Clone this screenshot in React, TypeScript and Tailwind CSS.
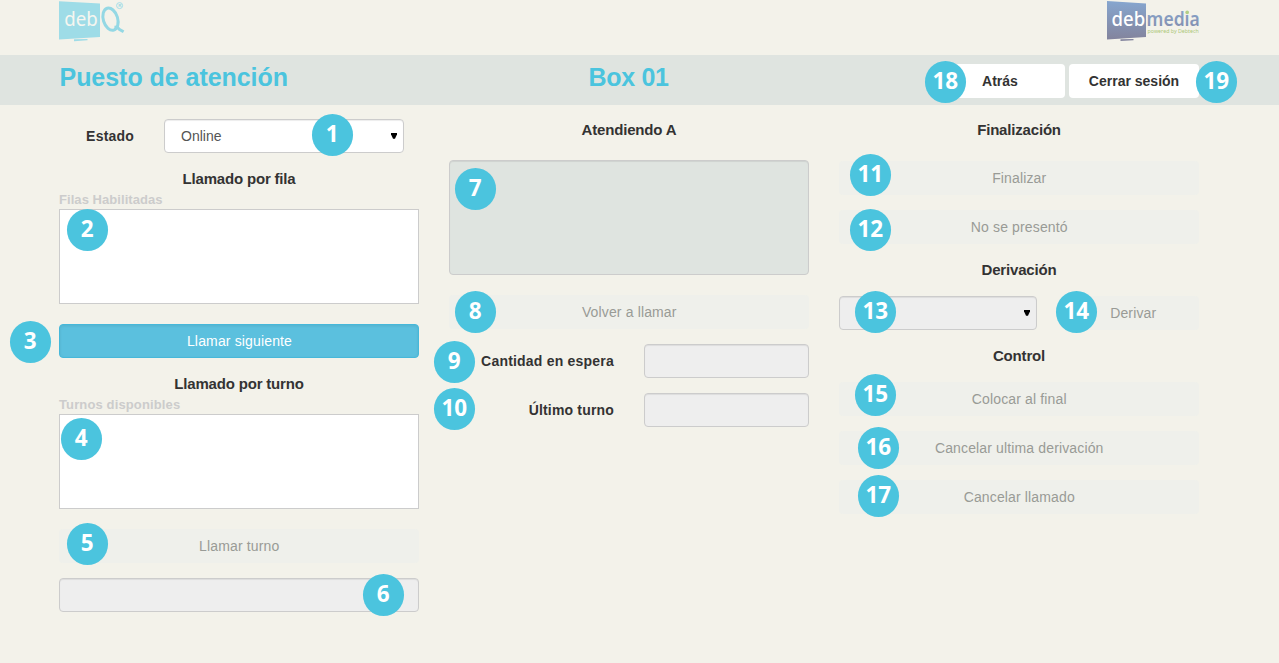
import type { ReactNode } from "react";
import clsx from "clsx";

function Badge({ n, className }: { n: number; className: string }) {
  return (
    <span
      className={clsx(
        "absolute z-10 mt-[0.4px] flex size-[41.4px] items-center justify-center rounded-full bg-[#4bc4de] pr-px pb-px font-['Noto_Sans',sans-serif] text-[22.5px] leading-none font-bold tracking-[-0.1px] text-white",
        className,
      )}
    >
      {n}
    </span>
  );
}

function Heading({ children, className }: { children: ReactNode; className?: string }) {
  return (
    <h2 className={clsx("text-center text-[15px] leading-5 font-bold tracking-[-0.18px] text-[#333]", className)}>{children}</h2>
  );
}

function DisabledButton({ children, badge, className }: { children: ReactNode; badge: ReactNode; className?: string }) {
  return (
    <div className={clsx("relative h-[34px]", className)}>
      <button
        disabled
        className="h-full w-full rounded bg-[#eff0eb] pl-[0.5px] text-[14px] tracking-[0.14px] text-[#999b96]"
      >
        {children}
      </button>
      {badge}
    </div>
  );
}

const field = "rounded border border-[#ccc] shadow-[inset_0_1px_1px_rgba(0,0,0,0.075)]";

function Arrow() {
  return (
    <svg className="mr-[6px] h-[6px] w-[6px]" viewBox="0 0 6 6">
      <path d="M0 0h6v1.2L4 5.8H2L0 1.2z" fill="#000" />
    </svg>
  );
}

function DebqLogo() {
  return (
    <svg width="68" height="42" viewBox="0 0 68 42" className="overflow-visible">
      <path d="M0 1.2 41 3.4V37L0 39.4z" fill="#9edce7" />
      <path d="M15 39.2l13.5-.3v1.4L15 41.2z" fill="#9edce7" />
      <text x="5.3" y="26.3" fontFamily="Noto Sans, sans-serif" fontSize="20" textLength="33.5" lengthAdjust="spacingAndGlyphs" fill="#f6f6f0">
        deb
      </text>
      <ellipse cx="51.5" cy="19.2" rx="7.2" ry="11.4" transform="rotate(-17 51.5 19.2)" fill="none" stroke="#94d8e4" strokeWidth="3" />
      <path d="M55.5 27.2l2.5-.2 2.6 2.6 4 2.2" fill="none" stroke="#94d8e4" strokeWidth="3" />
      <circle cx="60.6" cy="5.6" r="3" fill="none" stroke="#a5dee8" strokeWidth="1" />
      <text x="59.2" y="7.3" fontFamily="Liberation Sans, sans-serif" fontWeight="700" fontSize="4.4" fill="#94d8e4">
        R
      </text>
    </svg>
  );
}

function DebmediaLogo() {
  return (
    <svg width="94" height="42" viewBox="0 0 94 42" className="overflow-visible">
      <defs>
        <linearGradient id="screen" x1="0" y1="0" x2="0" y2="1">
          <stop offset="0" stopColor="#86a6cf" />
          <stop offset="1" stopColor="#83849d" />
        </linearGradient>
        <linearGradient id="word" x1="0" y1="0" x2="0" y2="1">
          <stop offset="0" stopColor="#89a9cf" />
          <stop offset="1" stopColor="#8289a9" />
        </linearGradient>
      </defs>
      <path d="M1 1 40 3.4V37L1 39.4z" fill="url(#screen)" />
      <path d="M14.5 39.2l13-.3v1.3l-13 .8z" fill="#83849d" />
      <text x="5.6" y="26.3" fontFamily="Noto Sans, sans-serif" fontWeight="500" fontSize="20" textLength="33.6" lengthAdjust="spacingAndGlyphs" fill="#fff">
        deb
      </text>
      <text x="40.6" y="26.3" fontFamily="Noto Sans, sans-serif" fontWeight="600" fontSize="19" textLength="53.2" lengthAdjust="spacingAndGlyphs" fill="url(#word)">
        media
      </text>
      <circle cx="81.2" cy="12.4" r="1.8" fill="#b5cf85" />
      <text x="41.6" y="33" fontFamily="Noto Sans, sans-serif" fontSize="6" textLength="51.2" lengthAdjust="spacingAndGlyphs" fill="#abc877">
        powered by Debtech
      </text>
    </svg>
  );
}

export default function App() {
  return (
    <div className="h-[663px] w-[1279px] overflow-hidden bg-[#f3f2ea] font-['Liberation_Sans',Arial,sans-serif] text-[14px] leading-5 text-[#333]">
      <header className="flex h-[55px] items-start justify-between pr-[79px] pl-[59px]">
        <DebqLogo />
        <DebmediaLogo />
      </header>

      <div className="grid h-[50px] grid-cols-[360px_360px_360px] gap-x-[30px] bg-[#dfe4e0] pl-[59px]">
        <h1 className="pt-[8px] pl-[0.5px] text-[25px] leading-7 font-bold tracking-[-0.04px] whitespace-nowrap text-[#4bc4de]">Puesto de atención</h1>
        <h1 className="pt-[8px] pr-px text-center text-[25px] leading-7 font-bold tracking-[-0.3px] text-[#4bc4de]">Box 01</h1>
        <div className="flex justify-end gap-1 pt-[9px]">
          <div className="relative h-[34px] w-[130px]">
            <button className="h-full w-full rounded bg-white font-bold">Atrás</button>
            <Badge n={18} className="-top-[3px] -left-[10px]" />
          </div>
          <div className="relative h-[34px] w-[130px]">
            <button className="h-full w-full rounded bg-white font-bold">Cerrar sesión</button>
            <Badge n={19} className="-top-[3px] left-[127px]" />
          </div>
        </div>
      </div>

      <main className="grid grid-cols-[360px_360px_360px] gap-x-[30px] pl-[59px]">
        <section className="flex flex-col pt-[14px]">
          <div className="flex h-[34px] items-center">
            <label className="w-[75px] text-right font-bold tracking-[0.2px]">Estado</label>
            <div className={clsx(field, "relative ml-[30px] flex h-[34px] w-[240px] items-center justify-between bg-white pl-4 text-[#555]")}>
              <span>Online</span>
              <Arrow />
              <Badge n={1} className="-top-[6px] left-[147px]" />
            </div>
          </div>
          <Heading className="mt-4">Llamado por fila</Heading>
          <div className="mt-px h-[20px] text-[13px] font-bold tracking-[0.06px] text-[#ccc]">Filas Habilitadas</div>
          <div className="relative -mt-px h-[95px] border border-[#ccc] bg-white">
            <Badge n={2} className="-top-px left-[7px]" />
          </div>
          <div className="relative mt-5 h-[34px]">
            <button className="h-full w-full rounded border border-[#46b8da] bg-[#5bc0de] pl-px tracking-[0.15px] text-white shadow-[inset_0_1px_3px_rgba(0,0,0,0.08)]">
              Llamar siguiente
            </button>
            <Badge n={3} className="-top-[3px] -left-[49px]" />
          </div>
          <Heading className="mt-4">Llamado por turno</Heading>
          <div className="mt-px h-[20px] text-[13px] font-bold tracking-[0.13px] text-[#ccc]">Turnos disponibles</div>
          <div className="relative -mt-px h-[95px] border border-[#ccc] bg-white">
            <Badge n={4} className="top-[3px] left-px" />
          </div>
          <DisabledButton className="mt-5" badge={<Badge n={5} className="-top-[6px] left-[8px]" />}>
            Llamar turno
          </DisabledButton>
          <div className={clsx(field, "relative mt-[15px] h-[34px] bg-[#eee]")}>
            <Badge n={6} className="-top-[5px] left-[303px]" />
          </div>
        </section>

        <section className="flex flex-col pt-[15px]">
          <Heading>Atendiendo A</Heading>
          <div className={clsx(field, "relative mt-5 h-[115px] bg-[#dfe4e0]")}>
            <Badge n={7} className="top-[7px] left-[5px]" />
          </div>
          <DisabledButton className="mt-5" badge={<Badge n={8} className="-top-[4px] left-[6px]" />}>
            Volver a llamar
          </DisabledButton>
          <div className="relative mt-[15px] flex h-[34px] items-center">
            <label className="w-[165px] text-right font-bold tracking-[0.21px]">Cantidad en espera</label>
            <div className={clsx(field, "ml-[30px] h-[34px] w-[165px] bg-[#eee]")} />
            <Badge n={9} className="-top-[3px] -left-[15px]" />
          </div>
          <div className="relative mt-[15px] flex h-[34px] items-center">
            <label className="w-[165px] text-right font-bold tracking-[0.18px]">Último turno</label>
            <div className={clsx(field, "ml-[30px] h-[34px] w-[165px] bg-[#eee]")} />
            <Badge n={10} className="-top-[5px] -left-[15px]" />
          </div>
        </section>

        <section className="flex flex-col pt-[15px]">
          <Heading>Finalización</Heading>
          <DisabledButton className="mt-[21px]" badge={<Badge n={11} className="-top-[7px] left-[11px]" />}>
            Finalizar
          </DisabledButton>
          <DisabledButton className="mt-[15px]" badge={<Badge n={12} className="-top-px left-[11px]" />}>
            No se presentó
          </DisabledButton>
          <Heading className="mt-4">Derivación</Heading>
          <div className="mt-4 flex gap-[30px]">
            <div className={clsx(field, "relative flex h-[34px] w-[198px] items-center justify-end bg-[#eee]")}>
              <Arrow />
              <Badge n={13} className="-top-[6px] left-[15px]" />
            </div>
            <DisabledButton className="w-[132px]" badge={<Badge n={14} className="-top-[5px] -left-[11px]" />}>
              Derivar
            </DisabledButton>
          </div>
          <Heading className="mt-4">Control</Heading>
          <DisabledButton className="mt-4" badge={<Badge n={15} className="-top-[8px] left-[16px]" />}>
            Colocar al final
          </DisabledButton>
          <DisabledButton className="mt-[15px]" badge={<Badge n={16} className="-top-[4px] left-[19px]" />}>
            Cancelar ultima derivación
          </DisabledButton>
          <DisabledButton className="mt-[15px]" badge={<Badge n={17} className="-top-[5px] left-[19px]" />}>
            Cancelar llamado
          </DisabledButton>
        </section>
      </main>
    </div>
  );
}
